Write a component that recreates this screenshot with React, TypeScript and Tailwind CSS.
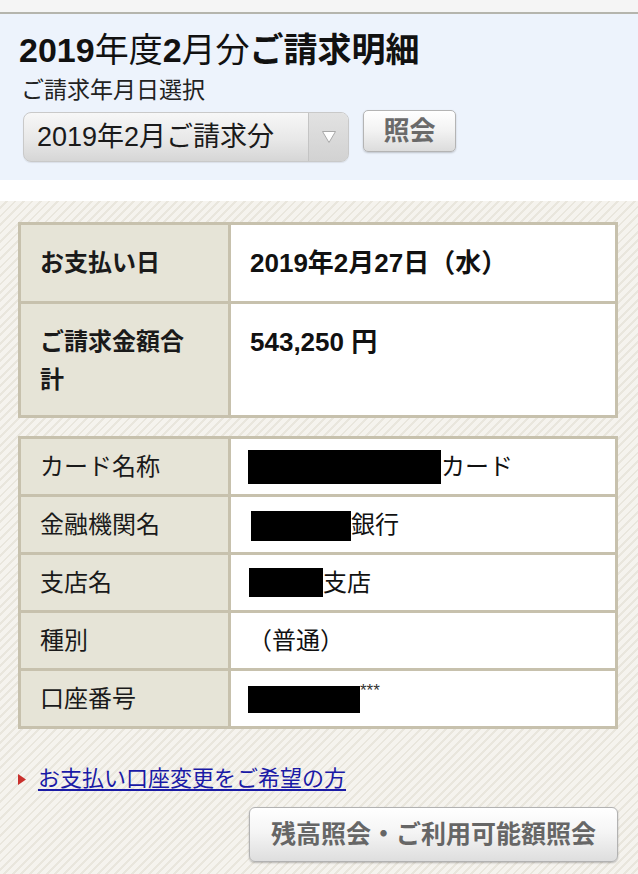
const font = "font-['Liberation_Sans','Noto_Sans_CJK_JP',sans-serif]";

const cellBorder = "border-[3px] border-[#c7c1ad]";

const SummaryRow = ({ label, value, pb }: { label: string; value: string; pb: string }) => (
	<tr>
		<th
			className={`${cellBorder} ${pb} w-[210px] bg-[#e6e4d7] pl-[19px] pr-[30px] pt-[19px] text-left align-top text-[24px] font-bold leading-[38px] text-[#1a1a1a]`}
		>
			{label}
		</th>
		<td
			className={`${cellBorder} ${pb} bg-white pl-[19px] pr-4 pt-[19px] align-top text-[26px] font-bold leading-[38px] text-[#111]`}
		>
			{value}
		</td>
	</tr>
);

const DetailRow = ({ label, children }: { label: string; children: React.ReactNode }) => (
	<tr>
		<th
			className={`${cellBorder} w-[210px] h-[58px] bg-[#e6e4d7] pl-[19px] text-left align-middle text-[24px] font-normal leading-[30px] text-[#1a1a1a]`}
		>
			{label}
		</th>
		<td
			className={`${cellBorder} h-[58px] bg-white pl-[17px] align-middle text-[24px] leading-[30px] text-[#111]`}
		>
			<div className="flex items-center">{children}</div>
		</td>
	</tr>
);

// redacted block
const Blackout = ({ className }: { className: string }) => (
	<span className={`inline-block bg-black ${className}`}></span>
);

export default function App() {
	return (
		<div className={`${font} flex min-h-screen w-[638px] flex-col bg-white`}>
			{/* top strip */}
			<div className="h-[14px] bg-[#f5f5f5] border-b-2 border-[#b5b5ad]"></div>

			{/* title / selector */}
			<section className="bg-[#edf3fc] pl-[19px] pr-4 pt-[16px] pb-[18px]">
				<h1 className="text-[34px] leading-[40px] text-[#111]">
					<span className="font-bold">2019</span>
					<span>年度</span>
					<span className="font-bold">2</span>
					<span>月分</span>
					<span className="font-bold">ご請求明細</span>
				</h1>
				<p className="mt-[5px] pl-[2px] text-[23px] leading-[30px] text-[#222]">
					ご請求年月日選択
				</p>
				<div className="mt-[5px] flex items-start gap-[14px] pl-[4px]">
					<div className="mt-[2px] flex h-[50px] w-[326px] overflow-hidden rounded-[8px] border border-[#c9c9c9] bg-[linear-gradient(#f7f7f7,#e8e8e8_55%,#d6d6d6)] shadow-[0_1px_1px_rgba(0,0,0,0.08)]">
						<div className="flex flex-1 items-center pl-[13px] text-[27px] text-[#1a1a1a]">
							2019年2月ご請求分
						</div>
						<div className="flex w-[40px] items-center justify-center border-l border-[#c4c4c4] bg-[linear-gradient(#e2e2e2,#d2d2d2)]">
							<svg width="16" height="14" viewBox="0 0 16 14">
								<path d="M1.5 1.5 L14.5 1.5 L8 12.5 Z" fill="#ffffff" stroke="#a9a9a9" strokeWidth="1" />
							</svg>
						</div>
					</div>
					<button className="flex h-[42px] w-[93px] items-center justify-center rounded-[5px] border border-[#b4b4b4] bg-[linear-gradient(#ffffff,#f2f2f2_50%,#dcdcdc)] text-[26px] font-bold text-[#6a6a6a] shadow-[0_1px_2px_rgba(0,0,0,0.2)]">
						照会
					</button>
				</div>
			</section>

			<div className="h-[21px] bg-white"></div>

			{/* striped content area */}
			<main className="flex-1 bg-[repeating-linear-gradient(135deg,#f5f3ee_0px,#f5f3ee_4px,#e9e6dd_4px,#e9e6dd_6px)] pl-[18px] pr-[20px] pt-[21px] pb-[14px]">
				<table className="w-full border-collapse">
					<tbody>
						<SummaryRow label="お支払い日" value="2019年2月27日（水）" pb="pb-[19px]" />
						<SummaryRow label="ご請求金額合計" value="543,250 円" pb="pb-[16px]" />
					</tbody>
				</table>

				<table className="mt-[18px] w-full border-collapse">
					<tbody>
						<DetailRow label="カード名称">
							<Blackout className="h-[34px] w-[193px]" />
							<span>カード</span>
						</DetailRow>
						<DetailRow label="金融機関名">
							<Blackout className="ml-[3px] mt-[2px] h-[30px] w-[100px]" />
							<span>銀行</span>
						</DetailRow>
						<DetailRow label="支店名">
							<Blackout className="ml-[1px] h-[29px] w-[74px]" />
							<span>支店</span>
						</DetailRow>
						<DetailRow label="種別">
							<span>（普通）</span>
						</DetailRow>
						<DetailRow label="口座番号">
							<Blackout className="mt-[2px] h-[27px] w-[112px]" />
							<span className="self-start mt-[-3px] text-[17px] leading-[20px] text-[#333]">***</span>
						</DetailRow>
					</tbody>
				</table>

				<div className="mt-[35px] flex items-center">
					<svg width="8" height="11" viewBox="0 0 8 11" className="mr-[12px]">
						<path d="M0 0 L8 5.5 L0 11 Z" fill="#c9302c" />
					</svg>
					<a href="#" className="text-[22px] leading-[30px] text-[#1a1aa6] underline underline-offset-[3px]">
						お支払い口座変更をご希望の方
					</a>
				</div>

				<div className="mt-[13px] flex justify-end">
					<button className="flex h-[55px] w-[369px] items-center justify-center rounded-[6px] border border-[#b2b2b2] bg-[linear-gradient(#ffffff,#f5f5f5_45%,#dedede)] text-[25px] font-bold text-[#666] shadow-[0_1px_2px_rgba(0,0,0,0.25)]">
						残高照会・ご利用可能額照会
					</button>
				</div>
			</main>
		</div>
	);
}
